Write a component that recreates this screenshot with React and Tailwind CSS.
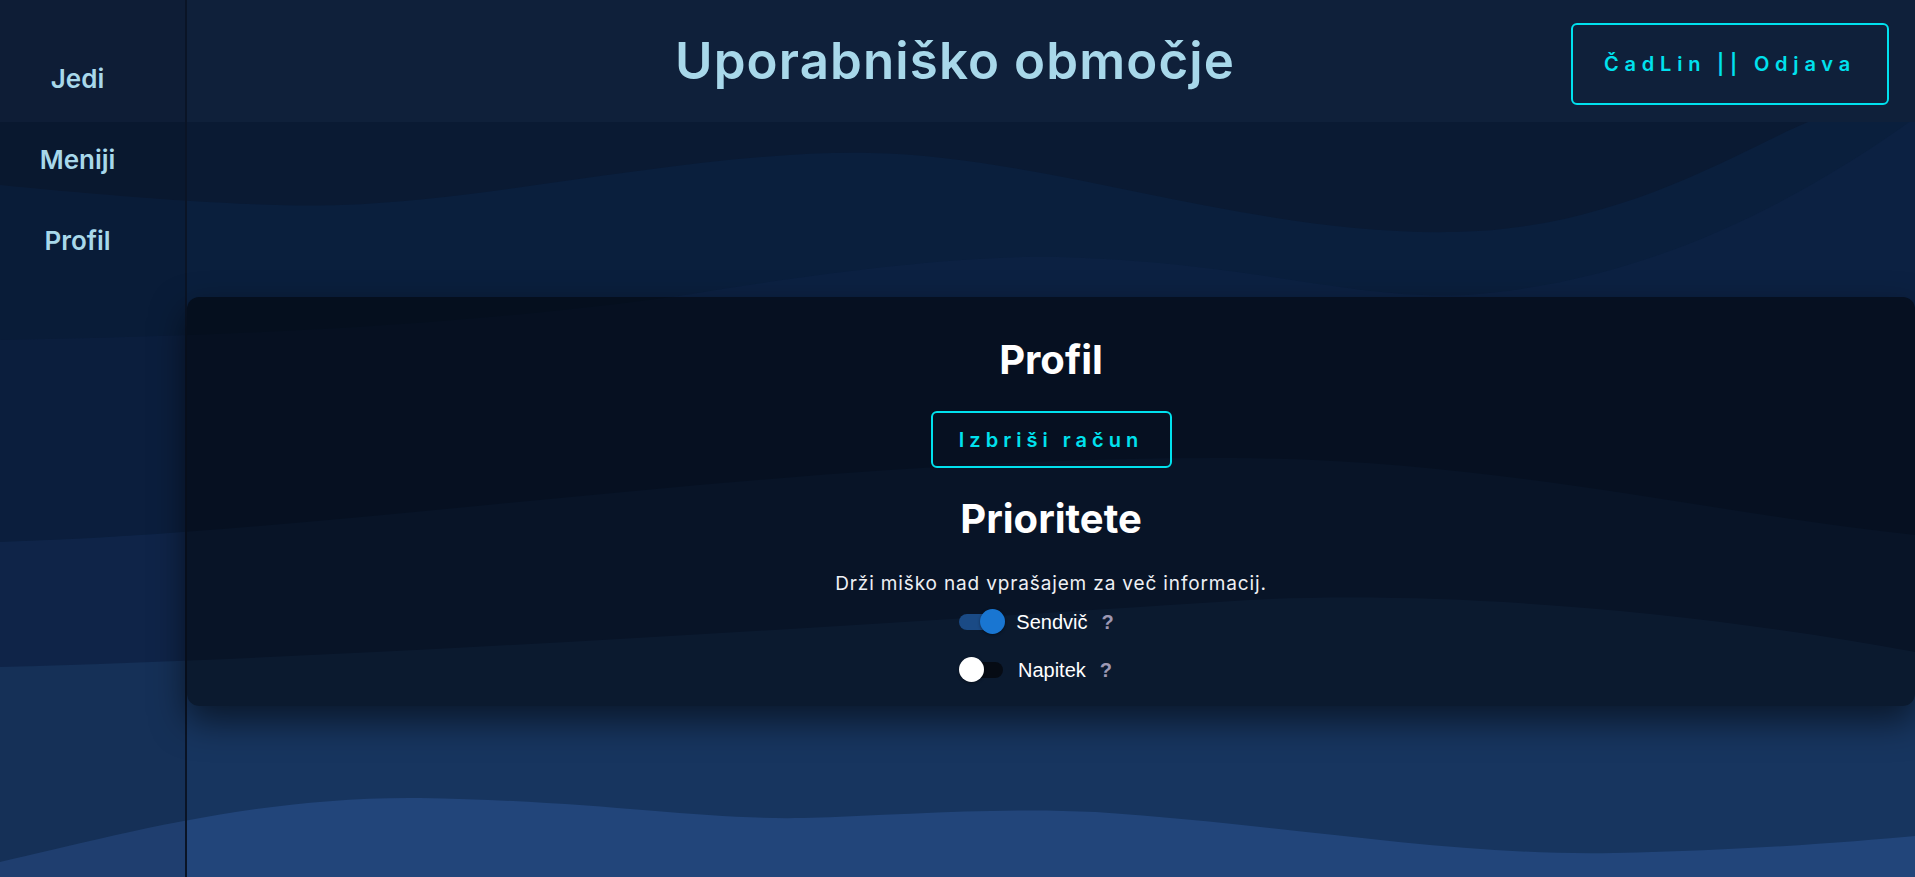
import { useState } from 'react';

const font = { fontFamily: 'Inter, "Noto Sans", sans-serif' };

// background waves, drawn in page coordinates
const waves = [
    { d: 'M0,185 C100,195 250,208 341,205 C500,200 700,150 870,153 C1050,156 1250,236 1455,232 C1620,229 1740,150 1808,122 L1915,122 L1915,877 L0,877 Z', fill: '#0a1f3d' },
    { d: 'M0,340 C300,335 500,320 672,297 C800,276 950,255 1058,257 C1250,262 1350,300 1466,295 C1650,282 1800,200 1915,118 L1915,877 L0,877 Z', fill: '#0c2142' },
    { d: 'M0,542 C350,532 800,456 1234,458 C1500,460 1700,512 1915,535 L1915,877 L0,877 Z', fill: '#10284f' },
    { d: 'M0,667 C400,656 900,622 1250,600 C1450,590 1700,612 1915,652 L1915,877 L0,877 Z', fill: '#17355f' },
    { d: 'M0,862 C100,840 250,796 420,798 C600,801 700,820 803,818 C900,815 1000,807 1096,812 C1300,826 1450,856 1614,853 C1750,850 1850,842 1915,836 L1915,877 L0,877 Z', fill: '#22457a' },
];

const Toggle = ({ on, onChange }) => (
    <button
        onClick={onChange}
        className="relative w-[48px] h-[26px] shrink-0"
    >
        <span className={`absolute left-[2px] top-[5px] w-[42px] h-[16px] rounded-full ${on ? 'bg-[#1a4a85]' : 'bg-[#060b14]'}`}></span>
        <span className={`absolute top-0 w-[25px] h-[25px] rounded-full shadow-[0_1px_3px_rgba(0,0,0,0.4)] ${on ? 'left-[23px] bg-[#1976d2]' : 'left-0 bg-white'}`}></span>
    </button>
);

const PriorityRow = ({ label, on, onChange, className }) => (
    <div className={`flex items-center h-[38px] pr-[31px] ${className}`}>
        <Toggle on={on} onChange={onChange} />
        <span className="ml-[11px] text-[20px] text-white" style={{ fontFamily: '"Liberation Sans", Arial, sans-serif' }}>{label}</span>
        <span className="ml-[14px] text-[20px] font-bold text-[#9d98b3]" style={{ fontFamily: '"Liberation Sans", Arial, sans-serif' }}>?</span>
    </div>
);

export default function App() {
    const [sendvic, setSendvic] = useState(true);
    const [napitek, setNapitek] = useState(false);

    return (
        <div className="relative w-full h-[877px] overflow-hidden bg-[#0a1a33]" style={font}>
            <svg className="absolute inset-0 w-full h-full" viewBox="0 0 1915 877" preserveAspectRatio="none">
                <rect x="0" y="0" width="1915" height="122" fill="#0f203a" />
                {waves.map((w, i) => (
                    <path key={i} d={w.d} fill={w.fill} />
                ))}
            </svg>

            <div className="relative flex h-full">
                {/* Sidebar */}
                <nav className="w-[187px] shrink-0 h-full border-r-2 border-[#0a1426] bg-[#050c18]/10 pt-[38px] pr-[30px]">
                    {['Jedi', 'Meniji', 'Profil'].map((item) => (
                        <a key={item} href="#" className="flex h-[81px] items-center justify-center text-[26px] font-semibold text-[#a8d8ea]">
                            {item}
                        </a>
                    ))}
                </nav>

                {/* Main */}
                <main className="flex-1 flex flex-col">
                    <header className="flex items-center h-[122px] bg-[#0f203a]">
                        <h1 className="ml-[200px] w-[1136px] text-center text-[51px] font-semibold text-[#a8d8ea] tracking-[0.022em]">
                            Uporabniško območje
                        </h1>
                        <button className="ml-auto mr-[26px] mt-[6px] w-[318px] h-[82px] flex items-center justify-center border-2 border-[#00e1ee] rounded-[6px] text-[20px] font-semibold tracking-[0.29em] text-[#00e1ee]">
                            ČadLin || Odjava
                        </button>
                    </header>

                    {/* Profile card */}
                    <section className="mt-[175px] h-[409px] rounded-[12px] bg-black/50 shadow-[0_15px_35px_rgba(0,0,0,0.55)] flex flex-col items-center pt-[39px]">
                        <h2 className="text-[40px] leading-[48px] font-bold text-white">Profil</h2>
                        <button className="mt-[27px] w-[241px] h-[57px] flex items-center justify-center border-2 border-[#00e1ee] rounded-[6px] text-[20px] font-semibold tracking-[0.25em] text-[#00e1ee]">
                            Izbriši račun
                        </button>
                        <h2 className="mt-[27px] text-[40px] leading-[48px] font-bold text-white">Prioritete</h2>
                        <p className="mt-[28px] text-[19px] leading-[26px] tracking-[0.045em] text-[#eef0f4]">
                            Drži miško nad vprašajem za več informacij.
                        </p>
                        <PriorityRow label="Sendvič" on={sendvic} onChange={() => setSendvic(!sendvic)} className="mt-[6px]" />
                        <PriorityRow label="Napitek" on={napitek} onChange={() => setNapitek(!napitek)} className="mt-[10px]" />
                    </section>
                </main>
            </div>
        </div>
    );
}
